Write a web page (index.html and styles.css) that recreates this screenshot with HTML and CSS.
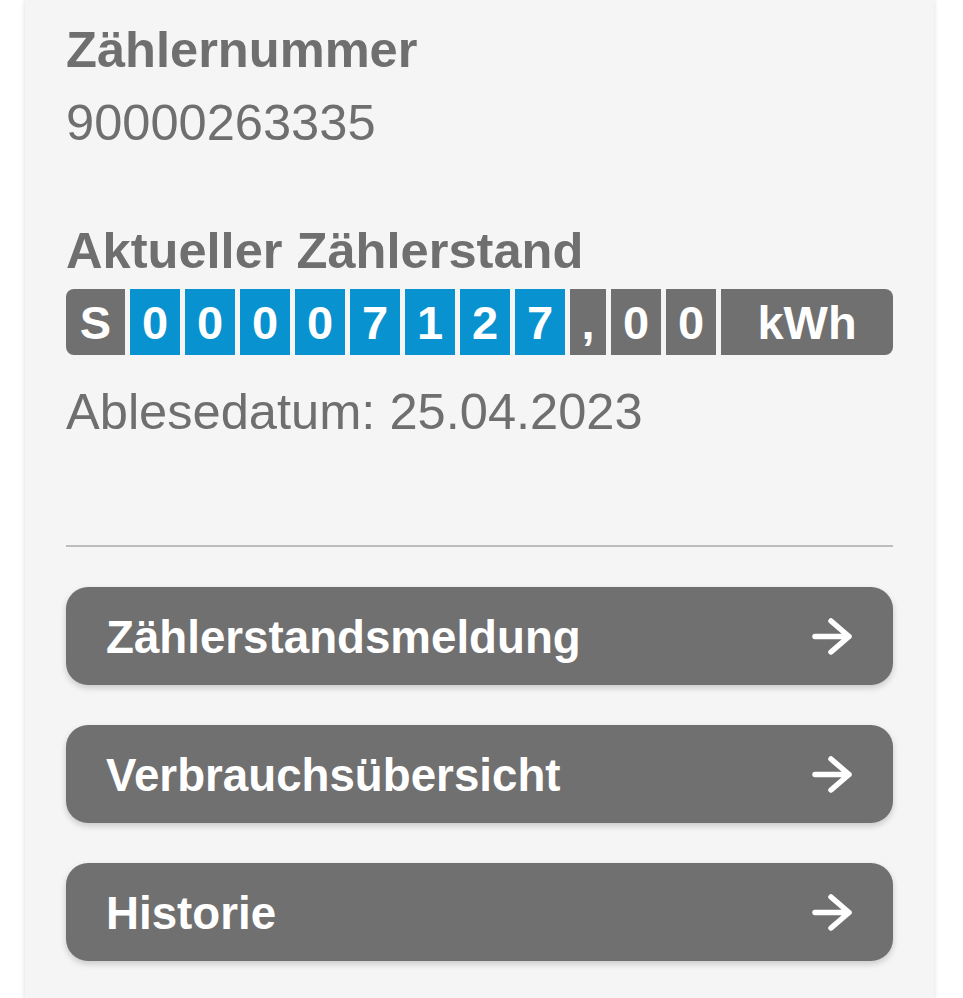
FILE: index.html
```html
<!DOCTYPE html>
<html lang="de">
<head>
    <meta charset="UTF-8">
    <meta name="viewport" content="width=device-width, initial-scale=1.0">
    <title>Zählerübersicht</title>
    <link rel="stylesheet" href="styles.css">
</head>
<body>
    <main class="card">
        <section class="meter-info">
            <h2 class="label">Zählernummer</h2>
            <p class="value">90000263335</p>
        </section>

        <section class="meter-reading">
            <h2 class="label">Aktueller Zählerstand</h2>
            <div class="counter">
                <span class="cell cell-type">S</span>
                <span class="cell cell-digit">0</span>
                <span class="cell cell-digit">0</span>
                <span class="cell cell-digit">0</span>
                <span class="cell cell-digit">0</span>
                <span class="cell cell-digit">7</span>
                <span class="cell cell-digit">1</span>
                <span class="cell cell-digit">2</span>
                <span class="cell cell-digit">7</span>
                <span class="cell cell-comma">,</span>
                <span class="cell cell-decimal">0</span>
                <span class="cell cell-decimal">0</span>
                <span class="cell cell-unit">kWh</span>
            </div>
            <p class="value read-date">Ablesedatum: 25.04.2023</p>
        </section>

        <hr class="divider">

        <nav class="actions">
            <a href="#" class="action-button">
                <span>Zählerstandsmeldung</span>
                <svg class="arrow" viewBox="0 0 40 37" width="40" height="37"><path d="M3 18.5H37M19 3L37 18.5L19 34"/></svg>
            </a>
            <a href="#" class="action-button">
                <span>Verbrauchsübersicht</span>
                <svg class="arrow" viewBox="0 0 40 37" width="40" height="37"><path d="M3 18.5H37M19 3L37 18.5L19 34"/></svg>
            </a>
            <a href="#" class="action-button">
                <span>Historie</span>
                <svg class="arrow" viewBox="0 0 40 37" width="40" height="37"><path d="M3 18.5H37M19 3L37 18.5L19 34"/></svg>
            </a>
        </nav>
    </main>
</body>
</html>
```

FILE: styles.css
```css
:root {
    --page-bg: #ffffff;
    --card-bg: #f5f5f5;
    --text-color: #6f6f6f;
    --box-gray: #707070;
    --box-blue: #0892d0;
    --line-color: #bdbdbd;
}

/* General Styling */
body {
    margin: 0;
    background: var(--page-bg);
    font-family: "Liberation Sans", Arial, sans-serif;
    color: var(--text-color);
}

.card {
    width: 909px;
    box-sizing: border-box;
    margin-left: 25px;
    min-height: 1000px;
    padding: 13px 41px 40px;
    background: var(--card-bg);
    box-shadow: 0 0 5px rgba(0, 0, 0, 0.15);
}

.label,
.value {
    margin: 0;
    font-size: 50.6px;
    line-height: 73px;
}

.label {
    font-weight: bold;
}

.value {
    font-weight: normal;
}

.meter-reading {
    margin-top: 55px;
}

/* Counter display */
.counter {
    display: flex;
    gap: 5px;
    height: 66px;
    margin-top: 2px;
}

.cell {
    display: flex;
    align-items: center;
    justify-content: center;
    width: 50px;
    color: #ffffff;
    font-size: 47px;
    font-weight: bold;
    background: var(--box-gray);
}

.cell-type {
    width: 59px;
    border-radius: 8px 0 0 8px;
}

.cell-digit {
    background: var(--box-blue);
}

.cell-comma {
    width: 36px;
}

.cell-unit {
    flex: 1;
    border-radius: 0 8px 8px 0;
}

.read-date {
    margin-top: 20px;
}

.divider {
    margin: 97px 0 0;
    border: none;
    height: 2px;
    background: var(--line-color);
}

/* Action buttons */
.actions {
    display: flex;
    flex-direction: column;
    gap: 40px;
    margin-top: 40px;
}

.action-button {
    display: flex;
    align-items: center;
    justify-content: space-between;
    height: 98px;
    padding: 0 41px 0 40px;
    border-radius: 22px;
    background: var(--box-gray);
    color: #ffffff;
    font-size: 45.7px;
    font-weight: bold;
    text-decoration: none;
    box-shadow: 0 3px 6px rgba(0, 0, 0, 0.18);
}

.action-button span {
    padding-top: 4px;
}

.arrow {
    fill: none;
    stroke: #ffffff;
    stroke-width: 5.5;
    stroke-linecap: round;
    stroke-linejoin: round;
}
```
